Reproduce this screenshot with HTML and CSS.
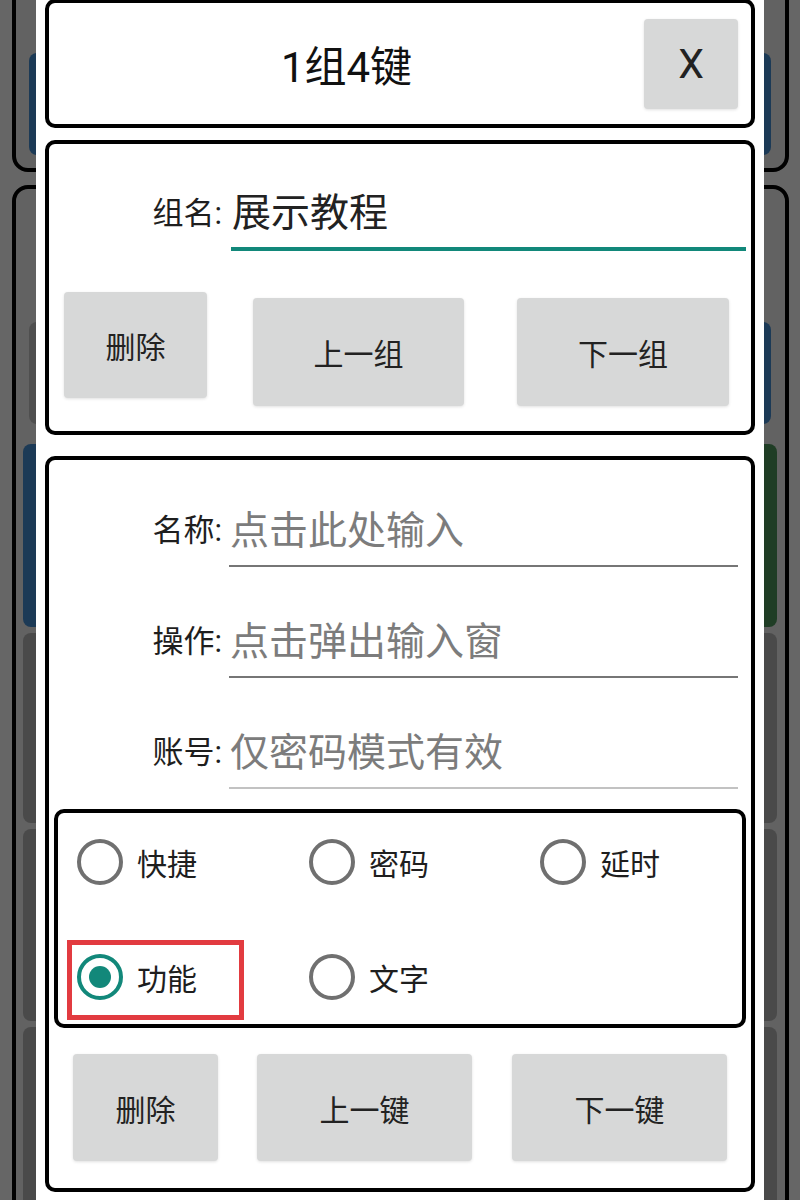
FILE: index.html
```html
<!DOCTYPE html>
<html lang="zh-CN">
<head>
    <meta charset="UTF-8">
    <meta name="viewport" content="width=device-width, initial-scale=1.0">
    <title>1组4键</title>
    <link rel="stylesheet" href="styles.css">
</head>
<body>
    <!-- dimmed app behind the dialog -->
    <div class="side side-left">
        <div class="ghost ghost-top">
            <div class="bar bar-blue bar-first"></div>
        </div>
        <div class="ghost ghost-list">
            <div class="bar bar-gray bar-second"></div>
            <div class="bar bar-blue bar-third"></div>
            <div class="bar bar-dark bar-a"></div>
            <div class="bar bar-dark bar-b"></div>
            <div class="bar bar-dark bar-c"></div>
        </div>
    </div>

    <div class="dialog">
        <div class="card card-title">
            <div class="title">1组4键</div>
            <button class="close">X</button>
        </div>

        <div class="card card-group">
            <div class="field">
                <label class="field-label" for="groupName">组名:</label>
                <input class="field-input focused" id="groupName" type="text" value="展示教程">
            </div>
            <div class="btn-row group-btns">
                <button class="button btn-del">删除</button>
                <button class="button btn-prev">上一组</button>
                <button class="button btn-next">下一组</button>
            </div>
        </div>

        <div class="card card-key">
            <div class="field">
                <label class="field-label" for="keyName">名称:</label>
                <input class="field-input" id="keyName" type="text" placeholder="点击此处输入">
            </div>
            <div class="field">
                <label class="field-label" for="keyAction">操作:</label>
                <input class="field-input" id="keyAction" type="text" placeholder="点击弹出输入窗">
            </div>
            <div class="field">
                <label class="field-label" for="keyAccount">账号:</label>
                <input class="field-input faint" id="keyAccount" type="text" placeholder="仅密码模式有效">
            </div>

            <div class="radio-box">
                <div class="radio"><span class="dot"></span>快捷</div>
                <div class="radio"><span class="dot"></span>密码</div>
                <div class="radio"><span class="dot"></span>延时</div>
                <div class="radio checked marked"><span class="dot"></span>功能</div>
                <div class="radio"><span class="dot"></span>文字</div>
            </div>

            <div class="btn-row key-btns">
                <button class="button">删除</button>
                <button class="button">上一键</button>
                <button class="button">下一键</button>
            </div>
        </div>
    </div>

    <div class="side side-right">
        <div class="ghost ghost-top">
            <div class="bar bar-blue bar-first"></div>
        </div>
        <div class="ghost ghost-list">
            <div class="bar bar-blue bar-second"></div>
            <div class="bar bar-green bar-third"></div>
            <div class="bar bar-dark bar-a"></div>
            <div class="bar bar-dark bar-b"></div>
            <div class="bar bar-dark bar-c"></div>
        </div>
    </div>
</body>
</html>
```

FILE: styles.css
```css
body {
    margin: 0;
    height: 1200px;
    overflow: hidden;
    display: flex;
    background-color: #666666;
    font-family: Roboto, "Noto Sans CJK SC", sans-serif;
    color: #1e1e1e;
}

/* background strips */
.side {
    width: 36px;
    flex: none;
    overflow: hidden;
    display: flex;
    flex-direction: column;
}
.ghost {
    width: 80px;
    flex: none;
    box-sizing: border-box;
    border: 4px solid #000;
    border-radius: 16px;
    background-color: #626262;
    display: flex;
    flex-direction: column;
}
.side-left .ghost {
    margin-left: 12px;
}
.side-right .ghost {
    margin-left: -55px;
    align-items: flex-end;
}
.ghost-top {
    margin-top: -30px;
    height: 202px;
}
.ghost-list {
    margin-top: 13px;
    height: 1100px;
}
.bar {
    flex: none;
    border-radius: 8px;
}
.bar-blue { background-color: #1c3a56; }
.bar-green { background-color: #1f3d25; }
.bar-gray { background-color: #4f4f4f; }
.bar-dark { background-color: #4a4a4a; }

.bar-first { margin-top: 79px; height: 102px; }
.bar-second { margin-top: 133px; height: 102px; }
.bar-third { margin-top: 20px; height: 183px; }
.bar-a { margin-top: 6px; height: 190px; }
.bar-b { margin-top: 6px; height: 192px; }
.bar-c { margin-top: 6px; height: 200px; }

.side-left .bar { width: 40px; margin-left: 7px; }
.side-left .bar-first, .side-left .bar-second { margin-left: 13px; }
.side-right .bar { width: 40px; margin-right: 8px; }
.side-right .bar-first, .side-right .bar-second { margin-right: 14px; }

/* dialog */
.dialog {
    width: 728px;
    flex: none;
    box-sizing: border-box;
    padding: 0 9px;
    background-color: #fff;
    display: flex;
    flex-direction: column;
}
.card {
    box-sizing: border-box;
    border: 4px solid #000;
    border-radius: 10px;
    background-color: #fff;
    flex: none;
}
.card-title {
    margin-top: -1px;
    height: 129px;
    display: flex;
    align-items: center;
    padding-right: 13px;
}
.title {
    flex: 1;
    text-align: center;
    font-size: 42px;
    color: #111;
}
.close {
    width: 94px;
    height: 90px;
    border: none;
    border-radius: 4px;
    background-color: #d7d8d8;
    box-shadow: 0 1px 3px rgba(0, 0, 0, 0.12);
    font-family: Roboto, sans-serif;
    font-size: 41px;
    color: #222;
    padding: 0;
}

.card-group {
    margin-top: 12px;
    height: 295px;
    padding-top: 33px;
}
.card-key {
    margin-top: 21px;
    height: 736px;
    padding-top: 35px;
}

.field {
    display: flex;
    align-items: center;
}
.field-label {
    width: 173px;
    flex: none;
    box-sizing: border-box;
    padding-bottom: 7px;
    text-align: right;
    font-size: 31px;
    color: #1e1e1e;
}
.field-input {
    flex: 1;
    min-width: 0;
    box-sizing: border-box;
    height: 72px;
    margin: 0 13px 0 7px;
    padding: 0 1px 6px;
    border: none;
    border-bottom: 2px solid #767676;
    outline: none;
    background: transparent;
    font-family: "Noto Sans CJK SC", sans-serif;
    font-size: 39px;
    color: #222;
}
.field-input::placeholder {
    color: #7c7c7c;
}
.field-input.faint {
    border-bottom-color: #c2c2c2;
}
.field-input.focused {
    height: 74px;
    margin: 0 5px 0 9px;
    border-bottom: 4px solid #12887a;
}
.card-key .field + .field {
    margin-top: 39px;
}

.btn-row {
    display: flex;
    align-items: flex-start;
}
.button {
    flex: none;
    border: none;
    border-radius: 4px;
    background-color: #d7d8d8;
    box-shadow: 0 1px 3px rgba(0, 0, 0, 0.12);
    font-family: "Noto Sans CJK SC", sans-serif;
    font-size: 30px;
    color: #222;
    padding: 0;
}
.group-btns {
    margin-top: 41px;
    padding-left: 15px;
}
.group-btns .btn-del {
    width: 143px;
    height: 106px;
}
.group-btns .btn-prev {
    width: 211px;
    height: 108px;
    margin: 6px 0 0 46px;
}
.group-btns .btn-next {
    width: 212px;
    height: 108px;
    margin: 6px 0 0 53px;
}
.key-btns {
    margin-top: 26px;
    padding-left: 24px;
    gap: 39px;
}
.key-btns .button {
    width: 215px;
    height: 107px;
}
.key-btns .button:first-child {
    width: 145px;
}
.key-btns .button:last-child {
    margin-left: 1px;
}

/* radio group */
.radio-box {
    margin: 20px 5px 0;
    height: 219px;
    box-sizing: border-box;
    border: 4px solid #000;
    border-radius: 10px;
    padding: 9px 0 0 19px;
    display: grid;
    grid-template-columns: 232px 231px 1fr;
    grid-auto-rows: 80px;
    row-gap: 35px;
}
.radio {
    position: relative;
    display: flex;
    align-items: center;
    gap: 14px;
    font-family: "Noto Sans CJK SC", sans-serif;
    font-size: 30px;
    color: #1e1e1e;
}
.dot {
    width: 46px;
    height: 46px;
    box-sizing: border-box;
    border: 4px solid #707070;
    border-radius: 50%;
    display: flex;
    align-items: center;
    justify-content: center;
}
.radio.checked .dot {
    border-color: #12887a;
}
.radio.checked .dot::before {
    content: "";
    width: 22px;
    height: 22px;
    border-radius: 50%;
    background-color: #12887a;
}
.radio.marked::after {
    content: "";
    position: absolute;
    left: -10px;
    top: 3px;
    width: 177px;
    height: 80px;
    box-sizing: border-box;
    border: 5px solid #e23b40;
}
```
